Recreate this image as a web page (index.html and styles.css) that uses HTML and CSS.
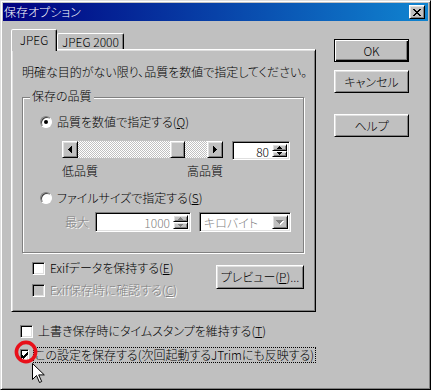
FILE: index.html
```html
<!DOCTYPE html>
<html lang="ja">

<head>
  <meta charset="UTF-8">
  <meta name="viewport" content="width=device-width, initial-scale=1.0">
  <title>保存オプション</title>
  <link rel="stylesheet" href="styles.css">
</head>

<body>
  <div class="window">
    <div class="titlebar">
      <span class="title">保存オプション</span>
      <span class="close raised">
        <svg width="8" height="7" viewBox="0 0 8 7" shape-rendering="crispEdges"><path d="M0 0h2v1H0zM6 0h2v1H6zM1 1h2v1H1zM5 1h2v1H5zM2 2h4v1H2zM3 3h2v1H3zM2 4h4v1H2zM1 5h2v1H1zM5 5h2v1H5zM0 6h2v1H0zM6 6h2v1H6z" fill="#000"/></svg>
      </span>
    </div>

    <div class="client">
      <div class="main">
        <div class="tabs">
          <div class="tab active">JPEG</div>
          <div class="tab">JPEG 2000</div>
        </div>

        <div class="panel">
          <p class="desc">明確な目的がない限り、品質を数値で指定してください。</p>

          <div class="group">
            <div class="legend">保存の品質</div>

            <div class="option">
              <span class="radio checked"></span>
              <span class="label">品質を数値で指定する(<u>Q</u>)</span>
            </div>

            <div class="slider-row">
              <div class="slider">
                <span class="arrow raised">
                  <svg width="4" height="7" viewBox="0 0 4 7" shape-rendering="crispEdges"><path d="M3 0h1v7H3zM2 1h1v5H2zM1 2h1v3H1zM0 3h1v1H0z" fill="#000"/></svg>
                </span>
                <div class="track"><span class="thumb raised"></span></div>
                <span class="arrow raised">
                  <svg width="4" height="7" viewBox="0 0 4 7" shape-rendering="crispEdges"><path d="M0 0h1v7H0zM1 1h1v5H1zM2 2h1v3H2zM3 3h1v1H3z" fill="#000"/></svg>
                </span>
              </div>
              <div class="spin sunken quality">
                <span class="value">80</span>
                <span class="spin-btns">
                  <span class="spin-btn raised">
                    <svg width="5" height="3" viewBox="0 0 5 3" shape-rendering="crispEdges"><path d="M2 0h1v1H2zM1 1h3v1H1zM0 2h5v1H0z" fill="#000"/></svg>
                  </span>
                  <span class="spin-btn raised">
                    <svg width="5" height="3" viewBox="0 0 5 3" shape-rendering="crispEdges"><path d="M0 0h5v1H0zM1 1h3v1H1zM2 2h1v1H2z" fill="#000"/></svg>
                  </span>
                </span>
              </div>
            </div>

            <div class="scale">
              <span>低品質</span>
              <span>高品質</span>
            </div>

            <div class="option second">
              <span class="radio"></span>
              <span class="label">ファイルサイズで指定する(<u>S</u>)</span>
            </div>

            <div class="size-row">
              <span class="disabled">最大</span>
              <div class="spin sunken size">
                <span class="value gray">1000</span>
                <span class="spin-btns">
                  <span class="spin-btn raised">
                    <svg width="5" height="3" viewBox="0 0 5 3" shape-rendering="crispEdges"><path d="M2 0h1v1H2zM1 1h3v1H1zM0 2h5v1H0z" fill="#808080"/></svg>
                  </span>
                  <span class="spin-btn raised">
                    <svg width="5" height="3" viewBox="0 0 5 3" shape-rendering="crispEdges"><path d="M0 0h5v1H0zM1 1h3v1H1zM2 2h1v1H2z" fill="#808080"/></svg>
                  </span>
                </span>
              </div>
              <div class="combo sunken">
                <span class="value gray">キロバイト</span>
                <span class="drop raised">
                  <svg width="8" height="5" viewBox="0 0 8 5" shape-rendering="crispEdges"><path d="M1 1h7v1H1zM2 2h5v1H2zM3 3h3v1H3zM4 4h1v1H4z" fill="#fff"/><path d="M0 0h7v1H0zM1 1h5v1H1zM2 2h3v1H2zM3 3h1v1H3z" fill="#808080"/></svg>
                </span>
              </div>
            </div>
          </div>

          <div class="exif">
            <div class="exif-checks">
              <div class="check">
                <span class="box"></span>
                <span class="label">Exifデータを保持する(<u>E</u>)</span>
              </div>
              <div class="check">
                <span class="box off"></span>
                <span class="label disabled">Exif保存時に確認する(<u>C</u>)</span>
              </div>
            </div>
            <button class="btn preview">プレビュー(<u>P</u>)...</button>
          </div>
        </div>

        <div class="check bottom">
          <span class="box"></span>
          <span class="label">上書き保存時にタイムスタンプを維持する(<u>T</u>)</span>
        </div>
        <div class="check bottom last">
          <span class="box">
            <svg width="7" height="7" viewBox="0 0 7 7" shape-rendering="crispEdges"><path d="M6 0h1v1H6zM5 1h2v1H5zM0 2h1v1H0zM4 2h3v1H4zM0 3h2v1H0zM3 3h3v1H3zM0 4h5v1H0zM1 5h3v1H1zM2 6h1v1H2z" fill="#000"/></svg>
          </span>
          <span class="label focus">この設定を保存する(次回起動するJTrimにも反映する)</span>
        </div>
      </div>

      <div class="buttons">
        <button class="btn default">OK</button>
        <button class="btn">キャンセル</button>
        <button class="btn help">ヘルプ</button>
      </div>
    </div>

    <!-- 赤丸とマウスカーソル -->
    <svg class="marker" width="60" height="60" viewBox="0 0 60 60">
      <circle cx="26" cy="22" r="9.6" fill="none" stroke="#e8101a" stroke-width="3.6"/>
      <path d="M32.5 33.5v16l4-4 3 7 2.2-1-3-6.6h5.6z" fill="#fff" stroke="#000" stroke-width="1" stroke-linejoin="miter"/>
    </svg>
  </div>
</body>

</html>
```

FILE: styles.css
```css
* {
  margin: 0;
  padding: 0;
  box-sizing: border-box;
}

body {
  width: 431px;
  height: 390px;
  background-color: #c0c0c0;
  font-family: "Noto Sans CJK JP", "Liberation Sans", sans-serif;
  font-size: 12px;
  font-weight: 300;
  line-height: 14px;
  font-feature-settings: "palt";
  color: #000;
  white-space: nowrap;
}

u {
  text-decoration: underline;
  text-underline-offset: 1px;
}

.window {
  position: relative;
  width: 431px;
  height: 390px;
  padding: 2px;
  border: 1px solid;
  border-color: #dfdfdf #000 #000 #dfdfdf;
  box-shadow: inset 1px 1px #fff, inset -1px -1px #808080;
  background-color: #c0c0c0;
}

/* bevels */
.raised {
  background-color: #c0c0c0;
  border: 1px solid;
  border-color: #fff #000 #000 #fff;
  box-shadow: inset 1px 1px #dfdfdf, inset -1px -1px #808080;
}

.sunken {
  background-color: #fff;
  border: 1px solid;
  border-color: #808080 #fff #fff #808080;
  box-shadow: inset 1px 1px #000, inset -1px -1px #dfdfdf;
}

.titlebar {
  display: flex;
  justify-content: space-between;
  align-items: flex-start;
  height: 18px;
  padding: 0 3px 0 1px;
  background: linear-gradient(to right, #000080, #1084d0);
}

.title {
  color: #fff;
  line-height: 18px;
}

.close {
  display: flex;
  align-items: center;
  justify-content: center;
  width: 16px;
  height: 14px;
  margin-top: 2px;
}

.client {
  display: flex;
  padding: 8px 0 0 8px;
}

.main {
  width: 305px;
}

.tabs {
  display: flex;
  align-items: flex-end;
  height: 20px;
}

.tab {
  height: 16px;
  padding-top: 1px;
  width: 67px;
  text-align: center;
  border: 1px solid;
  border-bottom: none;
  border-color: #fff #000 transparent #fff;
  border-radius: 2px 2px 0 0;
  box-shadow: inset -1px 0 #808080;
  background-color: #c0c0c0;
}

.tab.active {
  position: relative;
  z-index: 1;
  width: 46px;
  height: 22px;
  padding-top: 3px;
  margin-bottom: -2px;
}

.panel {
  height: 263px;
  padding: 15px 11px 0 10px;
  border: 1px solid;
  border-color: #fff #000 #000 #fff;
  box-shadow: inset 1px 1px #dfdfdf, inset -1px -1px #808080;
}

.group {
  height: 156px;
  margin-top: 18px;
  border: 1px solid #808080;
  box-shadow: 1px 1px #fff, inset 1px 1px #fff;
}

.legend {
  width: fit-content;
  margin: -9px 0 0 7px;
  padding: 0 2px;
  background-color: #c0c0c0;
}

.option {
  display: flex;
  align-items: center;
  margin: 12px 0 0 17px;
}

.option.second {
  margin-top: 13px;
}

.radio {
  position: relative;
  width: 12px;
  height: 12px;
  margin-right: 5px;
  border-radius: 50%;
  background-color: #fff;
  border: 1px solid;
  border-color: #808080 #fff #fff #808080;
  box-shadow: inset 1px 1px #404040;
}

.radio.checked::after {
  content: "";
  position: absolute;
  left: 3px;
  top: 3px;
  width: 4px;
  height: 4px;
  border-radius: 50%;
  background-color: #000;
}

.slider-row {
  display: flex;
  align-items: flex-start;
  margin: 12px 0 0 39px;
}

.slider {
  display: flex;
  width: 161px;
  height: 17px;
}

.arrow {
  display: flex;
  align-items: center;
  justify-content: center;
  width: 16px;
  height: 17px;
}

.track {
  flex: 1;
  display: flex;
  background: repeating-conic-gradient(#c0c0c0 0 25%, #fff 0 50%) 0 0 / 2px 2px;
}

/* 80 / 100 */
.thumb {
  width: 15px;
  height: 17px;
  margin-left: 92px;
}

.spin {
  display: flex;
  padding: 2px;
}

.spin.quality {
  width: 58px;
  height: 19px;
  margin-left: 9px;
}

.spin .value {
  flex: 1;
  text-align: right;
  padding-right: 3px;
  line-height: 15px;
}

.spin-btns {
  display: flex;
  flex-direction: column;
  width: 15px;
}

.spin-btn {
  display: flex;
  align-items: center;
  justify-content: center;
  flex: 1;
}

.scale {
  display: flex;
  justify-content: space-between;
  width: 161px;
  margin: 4px 0 0 39px;
}

.size-row {
  display: flex;
  align-items: center;
  margin: 7px 0 0 42px;
}

.disabled {
  color: #808080;
  text-shadow: 1px 1px #fff;
}

.gray {
  color: #808080;
}

.spin.size {
  width: 96px;
  height: 20px;
  margin-left: 6px;
}

.spin.size .value {
  line-height: 16px;
}

.combo {
  display: flex;
  width: 92px;
  height: 20px;
  margin-left: 8px;
  padding: 2px;
}

.combo .value {
  flex: 1;
  padding-left: 2px;
  line-height: 16px;
}

.drop {
  display: flex;
  align-items: center;
  justify-content: center;
  width: 16px;
}

.exif {
  display: flex;
  justify-content: space-between;
  align-items: flex-start;
  margin-top: 8px;
  padding-left: 10px;
}

.exif-checks {
  display: flex;
  flex-direction: column;
  gap: 8px;
}

.check {
  display: flex;
  align-items: center;
}

.box {
  display: flex;
  align-items: center;
  justify-content: center;
  width: 13px;
  height: 13px;
  margin-right: 5px;
  background-color: #fff;
  border: 1px solid;
  border-color: #808080 #fff #fff #808080;
  box-shadow: inset 1px 1px #000, inset -1px -1px #dfdfdf;
}

.box.off {
  background-color: #c0c0c0;
}

.btn {
  width: 75px;
  height: 23px;
  font: inherit;
  color: #000;
  background-color: #c0c0c0;
  border: 1px solid;
  border-color: #fff #000 #000 #fff;
  box-shadow: inset 1px 1px #dfdfdf, inset -1px -1px #808080;
}

.btn.preview {
  width: 88px;
  height: 24px;
  margin-top: 4px;
}

.check.bottom {
  margin: 12px 0 0 9px;
}

.check.bottom.last {
  margin-top: 9px;
}

.focus {
  margin-left: -1px;
  padding: 0 1px;
  border: 1px dotted #000;
}

.buttons {
  display: flex;
  flex-direction: column;
  width: 75px;
  margin: 10px 0 0 18px;
}

.btn.default {
  border-color: #000;
  box-shadow: inset 1px 1px #fff, inset -1px -1px #000, inset -2px -2px #808080;
  margin-bottom: 8px;
}

.btn.help {
  margin-top: 21px;
}

.marker {
  position: absolute;
  left: -1px;
  top: 329px;
  pointer-events: none;
}
```
